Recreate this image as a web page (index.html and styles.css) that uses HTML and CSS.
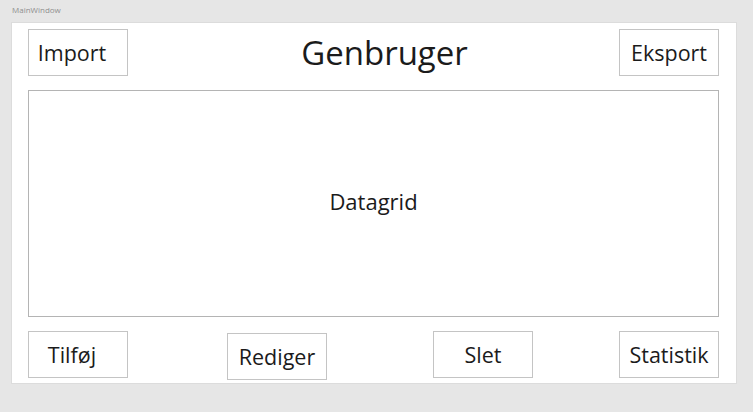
FILE: index.html
```html
<!DOCTYPE html>
<html lang="da">
<head>
<meta charset="utf-8">
<title>MainWindow</title>
<link rel="stylesheet" href="styles.css">
</head>
<body>
<div class="window-title">MainWindow</div>
<main class="panel">
  <header class="top-row">
    <button class="btn btn-left">Import</button>
    <h1 class="title">Genbruger</h1>
    <button class="btn">Eksport</button>
  </header>
  <section class="datagrid">Datagrid</section>
  <footer class="bottom-row">
    <button class="btn btn-left col-1">Tilføj</button>
    <button class="btn col-3 lowered">Rediger</button>
    <button class="btn col-5">Slet</button>
    <button class="btn col-7">Statistik</button>
  </footer>
</main>
</body>
</html>
```
FILE: styles.css
```css
html, body {
  margin: 0;
  padding: 0;
}
body {
  background: #e6e6e6;
  width: 753px;
  height: 412px;
  font-family: "Open Sans", "Noto Sans", sans-serif;
  color: #1b1b1b;
  overflow: hidden;
}
.window-title {
  height: 22px;
  box-sizing: border-box;
  padding: 4px 0 0 12px;
  font-size: 8px;
  line-height: 12px;
  color: #8f8f8f;
}
.panel {
  margin-left: 11px;
  width: 726px;
  height: 362px;
  box-sizing: border-box;
  background: #ffffff;
  border: 1px solid #dcdcdc;
  padding: 6px 17px 0 16px;
  display: flex;
  flex-direction: column;
}
.top-row {
  display: flex;
  align-items: center;
  justify-content: space-between;
  height: 47px;
}
.title {
  margin: 0;
  font-weight: 400;
  font-size: 33px;
  line-height: 47px;
  padding-left: 22px;
  padding-bottom: 1px;
}
.btn {
  width: 100px;
  height: 47px;
  box-sizing: border-box;
  background: #ffffff;
  border: 1px solid #c4c4c4;
  font-family: inherit;
  font-size: 21.5px;
  color: #1b1b1b;
  padding: 0 0 1px;
  text-align: center;
}
.btn-left {
  padding-right: 12px;
}
.datagrid {
  margin-top: 14px;
  height: 227px;
  box-sizing: border-box;
  border: 1px solid #b4b4b4;
  display: flex;
  align-items: center;
  justify-content: center;
  font-size: 22px;
  padding-bottom: 6px;
}
.bottom-row {
  margin-top: 14px;
  display: grid;
  grid-template-columns: 100px 99px 100px 106px 100px 86px 100px;
  align-items: start;
}
.col-1 { grid-column: 1; }
.col-3 { grid-column: 3; }
.col-5 { grid-column: 5; }
.col-7 { grid-column: 7; }
.lowered { margin-top: 2px; }
```
